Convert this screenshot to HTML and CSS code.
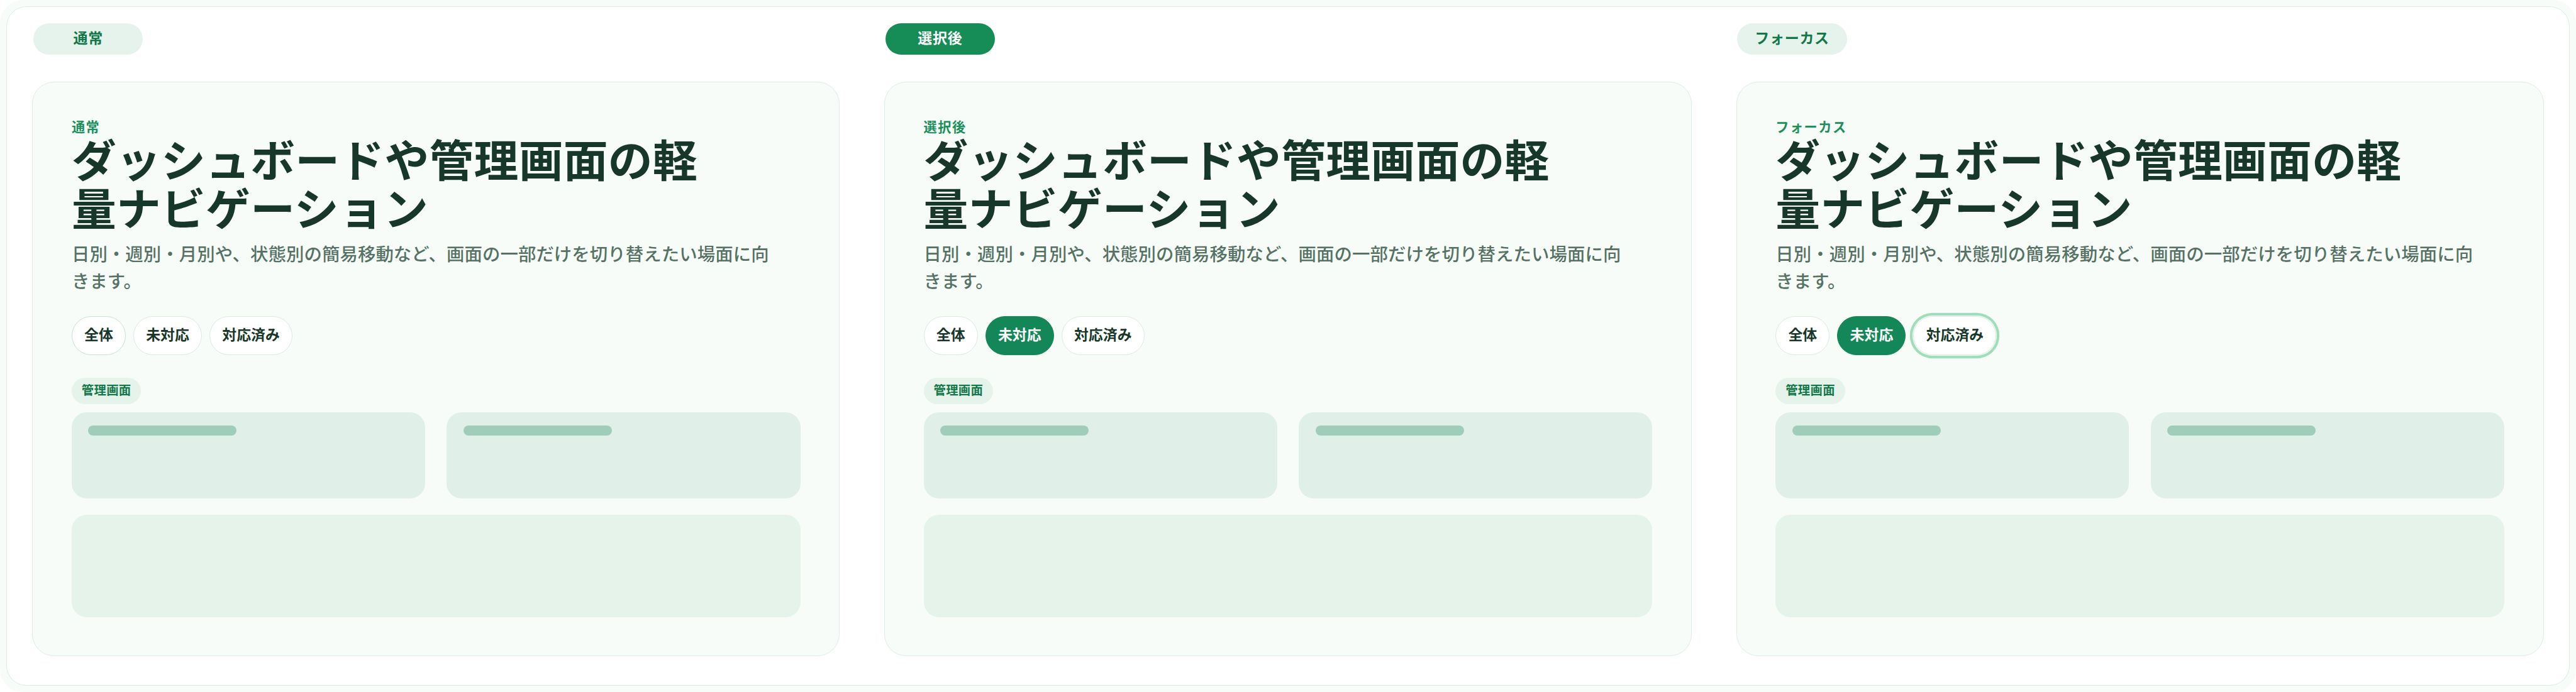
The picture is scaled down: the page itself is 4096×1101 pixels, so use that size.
FILE: index.html
```html
<!DOCTYPE html>
<html lang="ja">
<head>
	<meta charset="utf-8">
	<meta name="viewport" content="width=device-width, initial-scale=1">
<title>ナビゲーション</title>
<link rel="stylesheet" href="styles.css">
</head>
<body>

<div class="frame">
<div class="panel">

	<div class="col">
		<span class="tag">通常</span>
		<div class="card">
			<div class="eyebrow">通常</div>
			<h2>ダッシュボードや管理画面の軽量ナビゲーション</h2>
			<p>日別・週別・月別や、状態別の簡易移動など、画面の一部だけを切り替えたい場面に向きます。</p>
			<div class="chips">
				<span class="chip hover">全体</span>
				<span class="chip">未対応</span>
				<span class="chip">対応済み</span>
			</div>
			<span class="badge">管理画面</span>
			<div class="blocks">
				<div class="block"><div class="line"></div></div>
				<div class="block"><div class="line"></div></div>
				<div class="block wide"></div>
			</div>
		</div>
	</div>

	<div class="col">
		<span class="tag on">選択後</span>
		<div class="card">
			<div class="eyebrow">選択後</div>
			<h2>ダッシュボードや管理画面の軽量ナビゲーション</h2>
			<p>日別・週別・月別や、状態別の簡易移動など、画面の一部だけを切り替えたい場面に向きます。</p>
			<div class="chips">
				<span class="chip">全体</span>
				<span class="chip on">未対応</span>
				<span class="chip">対応済み</span>
			</div>
			<span class="badge">管理画面</span>
			<div class="blocks">
				<div class="block"><div class="line"></div></div>
				<div class="block"><div class="line"></div></div>
				<div class="block wide"></div>
			</div>
		</div>
	</div>

	<div class="col">
		<span class="tag">フォーカス</span>
		<div class="card">
			<div class="eyebrow">フォーカス</div>
			<h2>ダッシュボードや管理画面の軽量ナビゲーション</h2>
			<p>日別・週別・月別や、状態別の簡易移動など、画面の一部だけを切り替えたい場面に向きます。</p>
			<div class="chips">
				<span class="chip">全体</span>
				<span class="chip on">未対応</span>
				<span class="chip focus">対応済み</span>
			</div>
			<span class="badge">管理画面</span>
			<div class="blocks">
				<div class="block"><div class="line"></div></div>
				<div class="block"><div class="line"></div></div>
				<div class="block wide"></div>
			</div>
		</div>
	</div>

</div>
</div>

</body>
</html>
```

FILE: styles.css
```css
*{
	box-sizing:border-box;
}
body{
	margin:0;
	background:#fff;
	color:#17372b;
	font-family:"Noto Sans CJK JP", sans-serif;
	overflow:hidden;
}
.frame{
	height:1101px;
	padding:10px;
	background:#f7fcf9;
	border-radius:36px;
}
.panel{
	display:grid;
	grid-template-columns:repeat(3, 1284px);
	column-gap:70.7px;
	height:1081px;
	padding:26px 0 0 40.3px;
	background:#fff;
	border:1px solid #dbece4;
	border-radius:32px;
}
.col{
	display:flex;
	flex-direction:column;
	align-items:flex-start;
}
.tag{
	width:174.6px;
	height:50.3px;
	margin-left:1.6px;
	padding-bottom:4px;
	line-height:45.3px;
	text-align:center;
	font-size:23px;
	font-weight:700;
	letter-spacing:.03em;
	color:#127849;
	background:#e6f3ec;
	border-radius:26px;
}
.tag.on{
	color:#fff;
	background:#168c57;
}
.card{
	display:flex;
	flex-direction:column;
	align-items:flex-start;
	width:100%;
	height:914px;
	margin-top:43px;
	padding:57.5px 61.6px 0;
	background:#f7fcf9;
	border:1px solid #ddede6;
	border-radius:35px;
}
.eyebrow{
	height:24px;
	line-height:24px;
	font-size:21.2px;
	font-weight:700;
	letter-spacing:.07em;
	color:#1b905b;
}
h2{
	max-width:1045px;
	margin:.5px 0 0;
	font-size:70.8px;
	font-weight:700;
	letter-spacing:.28px;
	line-height:76.2px;
}
p{
	max-width:1134px;
	margin:16px 0 0;
	font-size:28.4px;
	font-weight:500;
	letter-spacing:.1px;
	line-height:42.9px;
	color:#557265;
}
.chips{
	display:flex;
	gap:12px;
	margin-top:35.3px;
}
.chip{
	height:62.6px;
	padding:0 19.2px;
	line-height:54.6px;
	font-size:22.9px;
	font-weight:700;
	background:#fff;
	border:1px solid #daebe3;
	border-radius:32px;
}
.chip.hover{
	border-color:#c9e1d6;
}
.chip.on{
	color:#fff;
	background:#138757;
	border-color:#138757;
}
.chip.focus{
	box-shadow:0 0 0 1px #f7fcf9, 0 0 0 5.3px #9fdebb;
}
.badge{
	width:110.5px;
	height:42.3px;
	margin-top:35.3px;
	line-height:37px;
	text-align:center;
	font-size:19.4px;
	font-weight:700;
	letter-spacing:.015em;
	color:#127849;
	background:#e6f3eb;
	border-radius:22px;
}
.blocks{
	display:grid;
	grid-template-columns:1fr 1fr;
	gap:25.8px 34.4px;
	width:100%;
	margin-top:13.3px;
}
.block{
	height:136.9px;
	padding:21.2px 26.5px;
	background:#e0efe8;
	border-radius:24px;
}
.block.wide{
	grid-column:1 / 3;
	height:162.7px;
	background:#e5f3eb;
}
.line{
	width:236px;
	height:15.9px;
	background:#a0ccba;
	border-radius:8px;
}
```
